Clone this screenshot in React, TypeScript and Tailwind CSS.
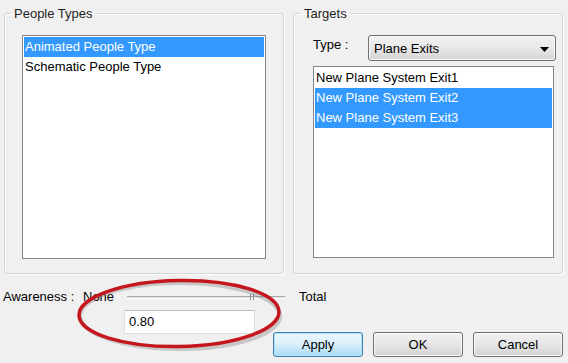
const peopleTypes = [
  { label: 'Animated People Type', selected: true },
  { label: 'Schematic People Type', selected: false },
];

const targets = [
  { label: 'New Plane System Exit1', selected: false },
  { label: 'New Plane System Exit2', selected: true },
  { label: 'New Plane System Exit3', selected: true },
];

function ListRow({ label, selected }: { label: string; selected: boolean }) {
  return (
    <div
      className={`h-[20px] leading-[20px] pl-[1px] whitespace-nowrap ${
        selected ? 'bg-[#3399ff] text-white' : 'text-black'
      }`}
    >
      {label}
    </div>
  );
}

function WinButton({ label, primary }: { label: string; primary?: boolean }) {
  return (
    <button
      className={`w-[90px] h-[25px] rounded-[3px] border text-[13px] text-black ${
        primary
          ? 'border-[#3c7fb1] bg-linear-to-b from-[#eaf6fd] via-[#d9f0fc] to-[#a7d9f5] shadow-[inset_0_0_0_1px_#b5e1f8]'
          : 'border-[#707070] bg-linear-to-b from-[#f2f2f2] via-[#e6e6e6] to-[#d2d2d2] shadow-[inset_0_0_0_1px_#fafafa]'
      }`}
    >
      {label}
    </button>
  );
}

export default function App() {
  return (
    <div className="relative w-[568px] h-[363px] overflow-hidden bg-[#f0f0f0] text-[13px] text-black font-['Liberation_Sans',Arial,sans-serif]">
      <div className="flex pt-[6px] pl-[4px] gap-[9px]">
        <fieldset className="w-[280px] h-[268px] border border-[#d5d5d5] rounded-[3px] shadow-[inset_1px_1px_0_#fff,1px_1px_0_#fff]">
          <legend className="ml-[6px] px-[3px] leading-[15px] text-[#1e1e1e]">People Types</legend>
          <div className="ml-[17px] mt-[14px] w-[244px] h-[224px] border border-[#828790] bg-white p-[1px]">
            {peopleTypes.map((p) => (
              <ListRow key={p.label} {...p} />
            ))}
          </div>
        </fieldset>

        <fieldset className="w-[270px] h-[268px] border border-[#d5d5d5] rounded-[3px] shadow-[inset_1px_1px_0_#fff,1px_1px_0_#fff]">
          <legend className="ml-[7px] px-[3px] leading-[15px] text-[#1e1e1e]">Targets</legend>
          <div className="flex items-start ml-[19px] mt-[14px]">
            <span className="w-[55px] mt-[2px] leading-[15px]">Type :</span>
            <div className="relative flex items-center w-[188px] h-[26px] pl-[5px] rounded-[3px] border border-[#707070] bg-linear-to-b from-[#f2f2f2] via-[#e8e8e8] to-[#d4d4d4] shadow-[inset_0_0_0_1px_#fafafa]">
              <span className="mt-[2px]">Plane Exits</span>
              <svg className="absolute right-[6px] top-[11px]" width="9" height="5" viewBox="0 0 9 5">
                <path d="M0 0 H9 L4.5 5 Z" fill="#000" />
              </svg>
            </div>
          </div>
          <div className="ml-[19px] mt-[5px] w-[241px] h-[192px] border border-[#828790] bg-white p-[1px]">
            {targets.map((t) => (
              <ListRow key={t.label} {...t} />
            ))}
          </div>
        </fieldset>
      </div>

      <div className="flex items-center h-[16px] mt-[15px]">
        <span className="w-[83px] pl-[3px]">Awareness :</span>
        <span className="w-[44px]">None</span>
        <div className="relative w-[158px] h-[3px] border-t border-[#a9a9a9] border-b border-b-white bg-[#dedede]">
          <div className="absolute left-[123px] top-[-3px] w-[1px] h-[6px] bg-[#8a8a8a]" />
          <div className="absolute left-[126px] top-[-3px] w-[1px] h-[6px] bg-[#8a8a8a]" />
        </div>
        <span className="ml-[14px]">Total</span>
      </div>

      <div className="flex items-start mt-[5px]">
        <div className="ml-[124px] w-[131px] h-[24px] flex items-center pl-[4px] bg-white border border-[#dbdfe6] border-t-[#b7bac0]">
          0.80
        </div>
        <div className="flex gap-[10px] ml-[18px] mt-[22px]">
          <WinButton label="Apply" primary />
          <WinButton label="OK" />
          <WinButton label="Cancel" />
        </div>
      </div>

      <svg className="absolute left-[74px] top-[276px]" width="212" height="78" viewBox="0 0 212 78">
        <ellipse cx="106" cy="40" rx="100" ry="33" fill="none" stroke="#7a7a7a" strokeOpacity="0.35" strokeWidth="4" />
        <ellipse cx="105" cy="37.5" rx="100" ry="33" fill="none" stroke="#c4161c" strokeWidth="3.5" transform="rotate(-1 105 37.5)" />
      </svg>
    </div>
  );
}
